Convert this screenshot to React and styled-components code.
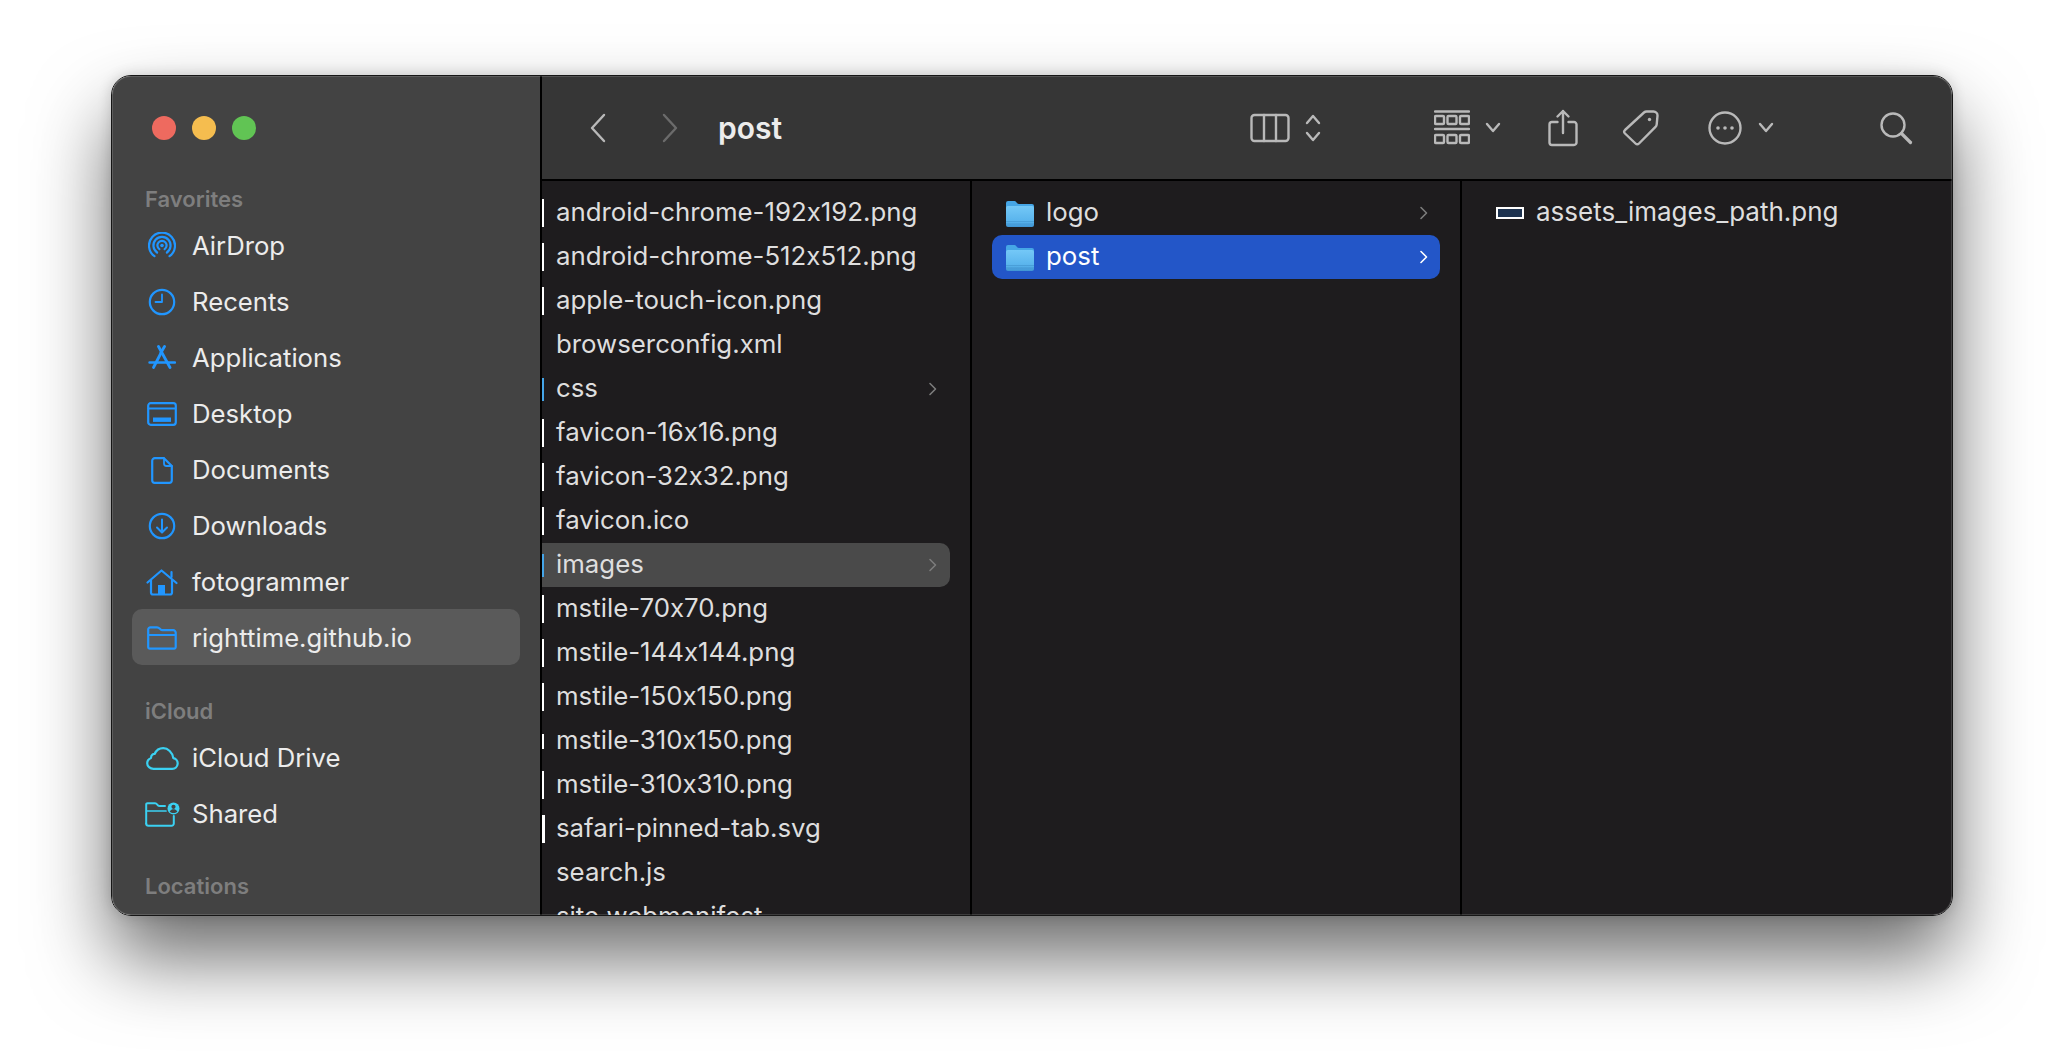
import React from "react";
import styled, { createGlobalStyle } from "styled-components";

const GlobalStyle = createGlobalStyle`
  html, body { margin: 0; padding: 0; background: #fff; }
  body {
    font-family: Inter, "Noto Sans", "Liberation Sans", sans-serif;
    font-feature-settings: "calt" 0;
  }
`;

const Page = styled.div`
  width: 2064px;
  height: 1064px;
  overflow: hidden;
  padding: 75px 0 0 111px;
  box-sizing: border-box;
  background: #fff;
`;

const Window = styled.div`
  position: relative;
  display: flex;
  width: 1842px;
  height: 841px;
  box-sizing: border-box;
  border: 1px solid #161616;
  border-radius: 20px;
  overflow: hidden;
  box-shadow: 0 42px 78px rgba(0, 0, 0, 0.58), 0 0 14px rgba(0, 0, 0, 0.16);

  &::after {
    content: "";
    position: absolute;
    inset: 0;
    border-radius: 19px;
    box-shadow: inset 0 0 0 1px rgba(255, 255, 255, 0.14);
    pointer-events: none;
  }
`;

const Sidebar = styled.aside`
  width: 430px;
  flex: none;
  box-sizing: border-box;
  background: #434343;
  border-right: 2px solid #000;
  padding: 40px 20px 0;
  overflow: hidden;
`;

const Lights = styled.div`
  display: flex;
  gap: 16px;
  padding-left: 20px;
  margin-bottom: 41px;
`;

const Light = styled.span`
  width: 24px;
  height: 24px;
  border-radius: 50%;
  background: ${(p) => p.$color};
`;

const SectionTitle = styled.div`
  height: 36px;
  line-height: 37px;
  margin-top: ${(p) => p.$gap || 0}px;
  padding-left: 13px;
  font-size: 22px;
  font-weight: 600;
  color: #7e7e7e;
`;

const SideRow = styled.div`
  display: flex;
  align-items: center;
  height: 56px;
  border-radius: 10px;
  background: ${(p) => (p.$active ? "#5a5a5a" : "transparent")};
  color: #ececec;
  font-size: 25.7px;
  white-space: nowrap;
`;

const SideIcon = styled.span`
  display: flex;
  align-items: center;
  justify-content: center;
  width: 60px;
  margin-top: 2px;
  flex: none;
`;

const SideLabel = styled.span`
  padding-top: 1px;
`;

const Main = styled.main`
  flex: 1;
  min-width: 0;
  display: flex;
  flex-direction: column;
`;

const Toolbar = styled.header`
  display: flex;
  align-items: center;
  height: 105px;
  flex: none;
  box-sizing: border-box;
  background: #363636;
  border-bottom: 2px solid #000;
  padding-left: 47px;
  color: #b9b9b9;
`;

const Title = styled.h1`
  margin: 0 0 0 39px;
  width: 532px;
  font-size: 30px;
  font-weight: 600;
  color: #ececec;
`;

const ToolIcon = styled.svg`
  flex: none;
  margin-left: ${(p) => p.$gap || 0}px;
  fill: none;
  stroke: ${(p) => (p.$dim ? "#6b6b6b" : "currentColor")};
  stroke-width: 2.4;
  stroke-linecap: round;
  stroke-linejoin: round;
`;

const Columns = styled.div`
  flex: 1;
  min-height: 0;
  display: flex;
  background: #1e1c1e;
`;

const Column = styled.div`
  width: ${(p) => p.$width}px;
  flex: ${(p) => (p.$width ? "none" : "1")};
  box-sizing: border-box;
  border-right: ${(p) => (p.$width ? "2px solid #000" : "0")};
  padding-top: 10px;
  overflow: hidden;
`;

const FileRow = styled.div`
  display: flex;
  align-items: center;
  height: 44px;
  margin-right: 20px;
  border-radius: 0 10px 10px 0;
  background: ${(p) => (p.$active ? "#4a4a4a" : "transparent")};
  color: #dedede;
  font-size: 25.8px;
  white-space: nowrap;
`;

const Strip = styled.span`
  flex: none;
  width: ${(p) => (p.$wide ? 3 : 2)}px;
  height: ${(p) => p.$height}px;
  margin-right: ${(p) => (p.$wide ? 11 : 12)}px;
  background: ${(p) => p.$color};
`;

const FolderRow = styled.div`
  display: flex;
  align-items: center;
  height: 44px;
  margin: 0 20px;
  padding: 0 12px 0 14px;
  border-radius: 10px;
  background: ${(p) => (p.$active ? "#2356c8" : "transparent")};
  color: ${(p) => (p.$active ? "#fff" : "#dedede")};
  font-size: 25.8px;
`;

const Name = styled.span`
  flex: 1;
  margin-left: ${(p) => p.$gap || 0}px;
  padding-bottom: 3px;
`;

const ChevronSlot = styled.span`
  display: flex;
  margin-right: 13px;
`;

const ThumbRow = styled.div`
  display: flex;
  align-items: center;
  height: 44px;
  padding-left: 34px;
  color: #dedede;
  font-size: 26px;
`;

const Thumb = styled.span`
  width: 28px;
  height: 12px;
  box-sizing: border-box;
  border: 2px solid #fff;
  background: #1e3350;
  margin-right: 12px;
  flex: none;
`;

const FolderSvg = styled.svg`
  flex: none;
`;

const SideSvg = ({ w = 28, h = 28, color = "#2196ff", children }) => (
  <svg width={w} height={h} viewBox={`0 0 ${w} ${h}`} fill="none" stroke={color} strokeWidth="2.2" strokeLinecap="round" strokeLinejoin="round">
    {children}
  </svg>
);

const AirDrop = () => (
  <SideSvg>
    <circle cx="14" cy="13.5" r="1.8" fill="#2196ff" stroke="none" />
    <path d="M11.4 17.2a4.6 4.6 0 1 1 5.2 0" />
    <path d="M9.1 20.5a8.6 8.6 0 1 1 9.8 0" />
    <path d="M6.5 24.2a13 13 0 1 1 15 0" />
  </SideSvg>
);
const Recents = () => (
  <SideSvg>
    <circle cx="14" cy="14" r="12.2" />
    <path d="M14 6.5V14H7.5" strokeWidth="1.8" />
  </SideSvg>
);
const Apps = () => (
  <SideSvg h={26}>
    <path d="M10.5 1.5L22 22.5" strokeWidth="2.8" />
    <path d="M16.5 1.5L13 7.5" strokeWidth="2.8" />
    <path d="M13.5 7L5.5 22.5" strokeWidth="2.8" />
    <path d="M1.5 17.5H27" strokeWidth="2.4" />
  </SideSvg>
);
const Desktop = () => (
  <SideSvg w={30} h={24}>
    <rect x="1.2" y="1.2" width="27.6" height="21.6" rx="2.5" />
    <path d="M1.5 6.5H28.5" strokeWidth="1.8" />
    <rect x="6" y="15.5" width="18" height="4.4" fill="#2196ff" stroke="none" />
  </SideSvg>
);
const Documents = () => (
  <SideSvg w={22} h={27}>
    <path d="M13 1.2H3.8a2.6 2.6 0 0 0-2.6 2.6v19.4a2.6 2.6 0 0 0 2.6 2.6h14.4a2.6 2.6 0 0 0 2.6-2.6V9z" />
    <path d="M13 1.2V6.5a2.5 2.5 0 0 0 2.5 2.5h5.3" strokeWidth="1.8" />
  </SideSvg>
);
const Downloads = () => (
  <SideSvg>
    <circle cx="14" cy="14" r="12.2" />
    <path d="M14 7.5V20M9 15.5l5 5 5-5" strokeWidth="2" />
  </SideSvg>
);
const Home = () => (
  <SideSvg w={32} h={27}>
    <path d="M1.5 13.5L15.5 1.5L30.5 14" />
    <path d="M5 11V23.5a2 2 0 0 0 2 2h17a2 2 0 0 0 2-2V11" />
    <path d="M25.5 3V8" />
    <rect x="12" y="16" width="7" height="9.5" fill="#2196ff" stroke="none" />
  </SideSvg>
);
const FolderOutline = () => (
  <SideSvg w={30} h={24}>
    <path d="M1.2 21V3.5a2.2 2.2 0 0 1 2.2-2.2h6.7c1.2 0 1.8.5 2.5 1.2l.8.8c.6.6 1.2.9 2 .9h10.9a2.4 2.4 0 0 1 2.4 2.4v14.5a1.6 1.6 0 0 1-1.6 1.6H3a1.8 1.8 0 0 1-1.8-1.7z" />
    <path d="M1.5 9H28.5" strokeWidth="1.8" />
  </SideSvg>
);
const Cloud = () => (
  <SideSvg w={33} h={23} color="#3bd1f2">
    <path d="M7.5 21.8h18.8a5.4 5.4 0 0 0 1-10.7C26.5 5.3 21.9 1.2 17.2 1.2c-4 0-7 2.3-8.6 5.8C8 6.8 7.2 7 6.4 7.6 5.2 8.5 5 10 5 11 2.8 12 1.2 13.9 1.2 16.2c0 3.2 2.8 5.6 6.3 5.6z" />
  </SideSvg>
);
const SharedFolder = () => (
  <svg width="35" height="25" viewBox="0 0 35 25" fill="none" stroke="#3bd1f2" strokeWidth="2" strokeLinecap="round" strokeLinejoin="round">
    <path d="M1.2 21.5V2.5a1.3 1.3 0 0 1 1.3-1.3h7.6c1.2 0 2 1.2 2.8 2.1.5.6 1.1.7 1.9.7H20" />
    <path d="M1.5 9H21" strokeWidth="1.7" />
    <path d="M1.2 21.5a2.3 2.3 0 0 0 2.3 2.3h23a2.3 2.3 0 0 0 2.3-2.3V14" />
    <circle cx="28.5" cy="6.5" r="6" fill="#3bd1f2" stroke="none" />
    <circle cx="28.5" cy="4.8" r="2.1" fill="#434343" stroke="none" />
    <path d="M24.7 9.5c1-1.6 2.3-2.2 3.8-2.2s2.8.6 3.8 2.2c-1 1-2.3 1.5-3.8 1.5s-2.8-.5-3.8-1.5z" fill="#434343" stroke="none" />
  </svg>
);

const Chevron = ({ color = "#7c7c7c" }) => (
  <svg width="9" height="14" viewBox="0 0 9 14" fill="none" stroke={color} strokeWidth="1.6" strokeLinecap="round" strokeLinejoin="round">
    <path d="M2 1.5L7.5 7 2 12.5" />
  </svg>
);

const Folder = () => (
  <FolderSvg width="28" height="27" viewBox="0 0 28 27">
    <defs>
      <linearGradient id="folderBody" x1="0" y1="0" x2="0" y2="1">
        <stop offset="0" stopColor="#74c8f7" />
        <stop offset="0.75" stopColor="#58b3ec" />
        <stop offset="1" stopColor="#3f94d3" />
      </linearGradient>
    </defs>
    <path d="M0 3a2 2 0 0 1 2-2h6.5c1.3 0 1.8 1.2 2.7 2.2.5.5 1 .8 1.8.8H26a2 2 0 0 1 2 2v6H0z" fill="#46a6e6" />
    <rect y="6" width="28" height="21" rx="2" fill="url(#folderBody)" />
    <path d="M0 21.5H28M0 24H28" stroke="#3f8fca" strokeWidth="0.8" opacity="0.7" />
  </FolderSvg>
);

const favorites = [
  ["AirDrop", <AirDrop />],
  ["Recents", <Recents />],
  ["Applications", <Apps />],
  ["Desktop", <Desktop />],
  ["Documents", <Documents />],
  ["Downloads", <Downloads />],
  ["fotogrammer", <Home />],
  ["righttime.github.io", <FolderOutline />, true],
];

const files = [
  { name: "android-chrome-192x192.png", strip: 28 },
  { name: "android-chrome-512x512.png", strip: 28 },
  { name: "apple-touch-icon.png", strip: 28 },
  { name: "browserconfig.xml" },
  { name: "css", folder: true },
  { name: "favicon-16x16.png", strip: 28 },
  { name: "favicon-32x32.png", strip: 28 },
  { name: "favicon.ico", strip: 28 },
  { name: "images", folder: true, active: true },
  { name: "mstile-70x70.png", strip: 28 },
  { name: "mstile-144x144.png", strip: 28 },
  { name: "mstile-150x150.png", strip: 28 },
  { name: "mstile-310x150.png", strip: 15 },
  { name: "mstile-310x310.png", strip: 28 },
  { name: "safari-pinned-tab.svg", strip: 28, wide: true },
  { name: "search.js" },
  { name: "site.webmanifest" },
];

function FileItem({ file }) {
  const color = file.folder ? "#45a5e8" : file.strip ? "#fff" : "transparent";
  return (
    <FileRow $active={file.active}>
      <Strip $height={file.folder ? 23 : file.strip || 0} $color={color} $wide={file.wide} />
      <Name>{file.name}</Name>
      {file.folder && (
        <ChevronSlot>
          <Chevron />
        </ChevronSlot>
      )}
    </FileRow>
  );
}

export default function App() {
  return (
    <Page>
      <GlobalStyle />
      <Window>
        <Sidebar>
          <Lights>
            <Light $color="#ee6a5f" />
            <Light $color="#f5bd4f" />
            <Light $color="#61c454" />
          </Lights>
          <SectionTitle>Favorites</SectionTitle>
          {favorites.map(([label, icon, active]) => (
            <SideRow key={label} $active={active}>
              <SideIcon>{icon}</SideIcon>
              <SideLabel>{label}</SideLabel>
            </SideRow>
          ))}
          <SectionTitle $gap={28}>iCloud</SectionTitle>
          <SideRow>
            <SideIcon><Cloud /></SideIcon>
            <SideLabel>iCloud Drive</SideLabel>
          </SideRow>
          <SideRow>
            <SideIcon><SharedFolder /></SideIcon>
            <SideLabel>Shared</SideLabel>
          </SideRow>
          <SectionTitle $gap={27}>Locations</SectionTitle>
        </Sidebar>
        <Main>
          <Toolbar>
            <ToolIcon width="18" height="32" viewBox="0 0 18 32" strokeWidth="2.6">
              <path d="M15 3L3 16l12 13" />
            </ToolIcon>
            <ToolIcon $gap={54} $dim width="18" height="32" viewBox="0 0 18 32" strokeWidth="2.6">
              <path d="M3 3l12 13L3 29" />
            </ToolIcon>
            <Title>post</Title>
            <ToolIcon width="40" height="30" viewBox="0 0 40 30">
              <rect x="1.5" y="2" width="37" height="26" rx="3" />
              <path d="M14 2V28M26 2V28" />
            </ToolIcon>
            <ToolIcon $gap={14} width="18" height="30" viewBox="0 0 18 30">
              <path d="M3 10l6-7 6 7M3 20l6 7 6-7" />
            </ToolIcon>
            <ToolIcon $gap={112} width="36" height="36" viewBox="0 0 36 36" strokeWidth="2">
              <path d="M1 1.5H35M1 19H35" strokeWidth="2.4" />
              <rect x="1" y="6" width="9" height="8" rx="1" />
              <rect x="13.5" y="6" width="9" height="8" rx="1" />
              <rect x="26" y="6" width="9" height="8" rx="1" />
              <rect x="1" y="25" width="9" height="8" rx="1" />
              <rect x="13.5" y="25" width="9" height="8" rx="1" />
              <rect x="26" y="25" width="9" height="8" rx="1" />
            </ToolIcon>
            <ToolIcon $gap={15} width="16" height="12" viewBox="0 0 16 12">
              <path d="M2 2l6 7 6-7" />
            </ToolIcon>
            <ToolIcon $gap={47} width="30" height="38" viewBox="0 0 30 38">
              <path d="M9.5 13H4a2.5 2.5 0 0 0-2.5 2.5v18A2.5 2.5 0 0 0 4 36h22a2.5 2.5 0 0 0 2.5-2.5v-18A2.5 2.5 0 0 0 26 13h-5.5" />
              <path d="M15 24V2M9.5 7.5L15 2l5.5 5.5" />
            </ToolIcon>
            <ToolIcon $gap={44} width="38" height="38" viewBox="0 0 38 38">
              <path d="M25 2.5h6.5a4 4 0 0 1 4 4.3l-.8 8.5a4 4 0 0 1-1.2 2.5L17 34.500a2.500 2.500 0 0 1-3.500 0L3 24.500a2.500 2.500 0 0 1 0-3.500L22 3.500a4 4 0 0 1 3-1z" />
              <circle cx="27.5" cy="10.5" r="1.7" fill="currentColor" stroke="none" />
            </ToolIcon>
            <ToolIcon $gap={48} width="34" height="34" viewBox="0 0 34 34">
              <circle cx="17" cy="17" r="15.5" />
              <circle cx="10" cy="17" r="1.8" fill="currentColor" stroke="none" />
              <circle cx="17" cy="17" r="1.8" fill="currentColor" stroke="none" />
              <circle cx="24" cy="17" r="1.8" fill="currentColor" stroke="none" />
            </ToolIcon>
            <ToolIcon $gap={16} width="16" height="12" viewBox="0 0 16 12">
              <path d="M2 2l6 7 6-7" />
            </ToolIcon>
            <ToolIcon $gap={105} width="34" height="34" viewBox="0 0 34 34" strokeWidth="2.6">
              <circle cx="14" cy="14" r="11.5" />
              <path d="M22.5 22.5L31.5 31.5" strokeWidth="3.2" />
            </ToolIcon>
          </Toolbar>
          <Columns>
            <Column $width={430}>
              {files.map((file) => (
                <FileItem key={file.name} file={file} />
              ))}
            </Column>
            <Column $width={490}>
              <FolderRow>
                <Folder />
                <Name $gap={12}>logo</Name>
                <Chevron />
              </FolderRow>
              <FolderRow $active>
                <Folder />
                <Name $gap={12}>post</Name>
                <Chevron color="#fff" />
              </FolderRow>
            </Column>
            <Column>
              <ThumbRow>
                <Thumb />
                <Name>assets_images_path.png</Name>
              </ThumbRow>
            </Column>
          </Columns>
        </Main>
      </Window>
    </Page>
  );
}
